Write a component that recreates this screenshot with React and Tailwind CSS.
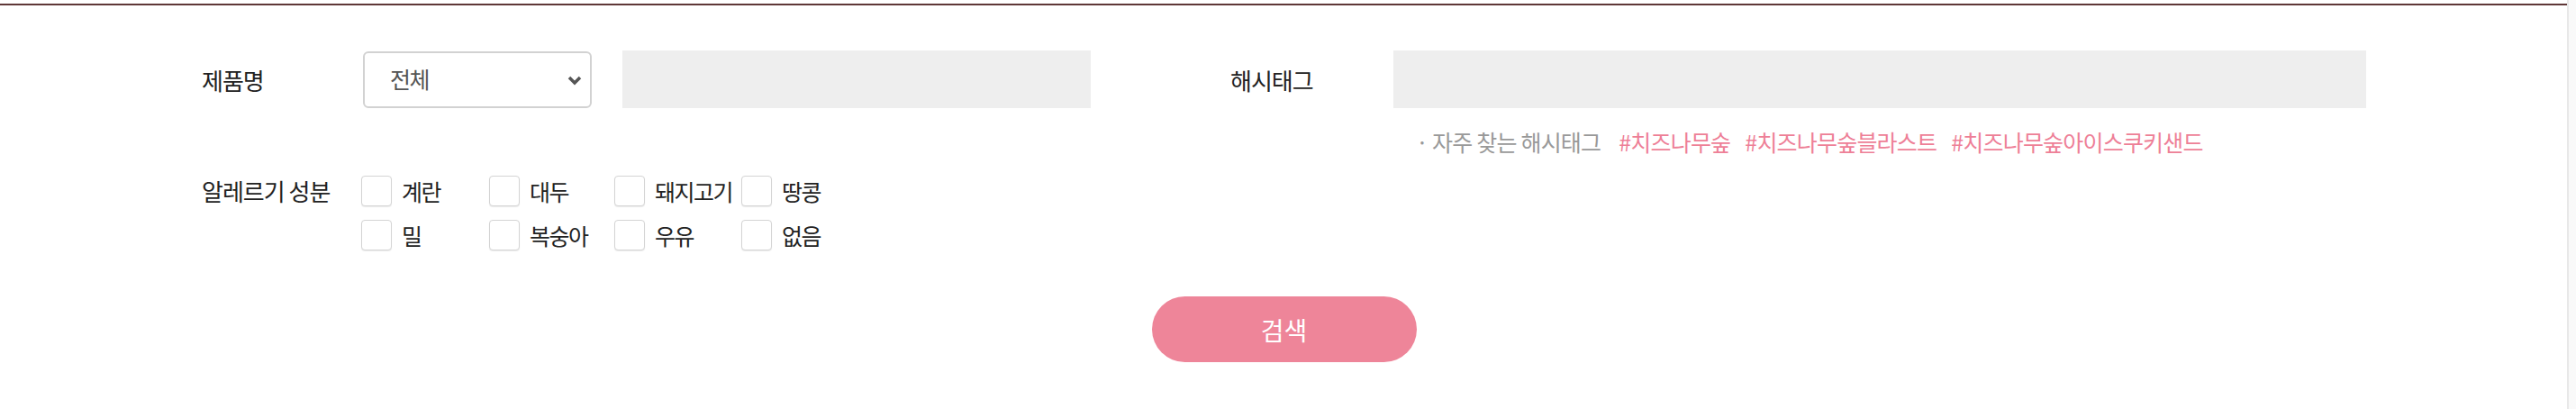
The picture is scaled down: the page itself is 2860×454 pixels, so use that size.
import React from "react";

const allergies = [
  ["계란", "대두", "돼지고기", "땅콩"],
  ["밀", "복숭아", "우유", "없음"],
];

function Box({ label }) {
  return (
    <label className="flex items-center gap-[11px]">
      <span className="block h-[34px] w-[34px] shrink-0 rounded-[4px] border border-[#d4d4d4] bg-white shadow-[0_1px_1px_rgba(0,0,0,0.08)]" />
      <span className="whitespace-nowrap text-[25px] leading-[34px] tracking-[-1.5px] text-[#222]">{label}</span>
    </label>
  );
}

export default function App() {
  return (
    <div className="flex h-[454px] w-[2860px] bg-white font-['Noto_Sans_CJK_KR',sans-serif]">
      <div className="flex flex-1 flex-col">
        <div className="mt-[4px] h-[2px] bg-[#5f3838]" />
        <div className="pl-[224px] pr-[223px] pt-[50px]">
          {/* Row 1 */}
          <div className="flex items-center">
            <div className="w-[179px] text-[26px] tracking-[-1px] text-[#222]">제품명</div>
            <div className="relative flex h-[63px] w-[254px] items-center rounded-[6px] border-2 border-[#d2d2d2] bg-white pl-[28px]">
              <span className="text-[25px] tracking-[-1.5px] text-[#555]">전체</span>
              <svg className="absolute right-[9px] top-[24px]" width="16" height="12" viewBox="0 0 16 12">
                <polyline points="2,3 8,9 14,3" fill="none" stroke="#555" strokeWidth="3.5" />
              </svg>
            </div>
            <div className="ml-[34px] h-[64px] w-[520px] bg-[#eeeeee]" />
            <div className="ml-[155px] w-[181px] text-[26px] tracking-[-1px] text-[#222]">해시태그</div>
            <div className="h-[64px] w-[1080px] bg-[#eeeeee]" />
          </div>
          {/* Row 2 hint */}
          <div className="ml-[1348px] mt-[22px] flex items-center gap-[16px] text-[25px] leading-[30px] tracking-[-0.8px]">
            <span className="text-[#999]">· 자주 찾는 해시태그</span>
            <span className="ml-[4px] text-[#ee7f97]">#치즈나무숲</span>
            <span className="text-[#ee7f97]">#치즈나무숲블라스트</span>
            <span className="text-[#ee7f97]">#치즈나무숲아이스쿠키샌드</span>
          </div>
          {/* Row 3 allergy */}
          <div className="mt-[23px] flex">
            <div className="w-[177px] whitespace-nowrap text-[26px] leading-[34px] tracking-[-1px] text-[#222]">알레르기 성분</div>
            <div className="flex flex-col gap-[15px]">
              {allergies.map((row, i) => (
                <div key={i} className="grid grid-cols-[142px_139px_141px_141px]">
                  {row.map((a) => (
                    <Box key={a} label={a} />
                  ))}
                </div>
              ))}
            </div>
          </div>
          {/* Button */}
          <div className="mt-[51px] flex justify-center">
            <button className="h-[73px] w-[294px] rounded-full bg-[#ee8599] text-[28px] text-white">검색</button>
          </div>
        </div>
      </div>
      <div className="w-[10px] border-l-2 border-[#e8e8e8] bg-[#f9f9f9]" />
    </div>
  );
}
